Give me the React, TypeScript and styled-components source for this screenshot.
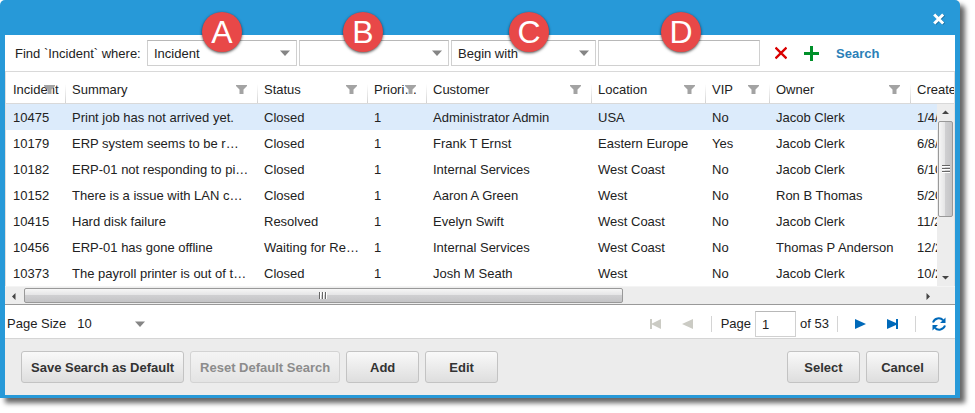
import React from "react";
import styled, { createGlobalStyle, css } from "styled-components";

const GlobalStyle = createGlobalStyle`
  * { box-sizing: border-box; }
  body {
    margin: 0;
    background: #fff;
    color: #222;
    font: 13px/16px "Liberation Sans", Arial, sans-serif;
    overflow: hidden;
  }
  button, input, select { font: inherit; color: inherit; margin: 0; }
`;

const Dialog = styled.main`
  margin: 0 15px 15px 0;
  padding: 0 5px 3px;
  background: #2799d8;
  border-radius: 5px 5px 0 0;
  box-shadow: 5px 5px 5px rgba(0, 0, 0, 0.6);
`;

const TitleBar = styled.header`
  height: 35px;
  display: flex;
  align-items: center;
  justify-content: flex-end;
  padding: 3px 9px 0 0;
`;

const IconButton = styled.button`
  display: flex;
  align-items: center;
  justify-content: center;
  padding: 0;
  border: 0;
  background: none;
  cursor: pointer;
  &:disabled { cursor: default; }
`;

const SearchBar = styled.form`
  display: flex;
  align-items: center;
  height: 37px;
  padding: 0 10px;
  background: #fff;
  border-bottom: 1px solid #d9d9d9;
`;

const SearchLabel = styled.span`
  width: 132px;
  padding-top: 2px;
  white-space: nowrap;
`;

const Field = styled.div<{ $width: number }>`
  position: relative;
  display: grid;
  align-items: center;
  width: ${(p) => p.$width}px;
  margin-right: 2px;
  & > * { grid-area: 1 / 1; }
  & > svg { justify-self: end; margin-right: 7px; pointer-events: none; }
`;

const boxed = css`
  width: 100%;
  height: 26px;
  padding: 2px 6px 0;
  border: 1px solid #d0d0d0;
  border-top-color: #b8b8b8;
  border-radius: 0;
  background: #fff;
  outline: none;
`;

const Select = styled.select`
  ${boxed}
  appearance: none;
`;

const TextInput = styled.input`
  ${boxed}
`;

const Badge = styled.span<{ $at: number }>`
  position: absolute;
  left: ${(p) => p.$at}px;
  top: -28px;
  width: 40px;
  height: 40px;
  border-radius: 50%;
  background: #e84848;
  box-shadow: 0 1px 3px rgba(0, 0, 0, 0.7);
  color: #fff;
  font-size: 32px;
  line-height: 40px;
  text-align: center;
`;

const SearchActions = styled.div`
  display: flex;
  align-items: center;
  gap: 17px;
  margin-left: 13px;
`;

const SearchButton = styled.button`
  padding: 2px 0 0;
  border: 0;
  background: none;
  color: #2a7fb8;
  font-weight: bold;
  cursor: pointer;
`;

const GridArea = styled.section`
  display: grid;
  grid-template-columns: minmax(0, 1fr) 17px;
  grid-template-rows: 32px auto;
  background: #fff;
  border-left: 1px solid #e0e0e0;
  border-right: 1px solid #e0e0e0;
`;

const TableClip = styled.div`
  grid-area: 1 / 1 / 3 / 3;
  overflow: hidden;
`;

const Table = styled.table`
  width: 100%;
  min-width: 1040px;
  table-layout: fixed;
  border-collapse: separate;
  border-spacing: 0;
`;

const HeaderCell = styled.th`
  position: relative;
  height: 32px;
  padding: 4px 6px 0;
  font-weight: normal;
  text-align: left;
  white-space: nowrap;
  border-bottom: 1px solid #d9d9d9;
  background: linear-gradient(transparent, #d0d0d0) right 0 top 12px / 1px 20px no-repeat;
  &:first-child { padding-left: 7px; }
`;

const FilterButton = styled(IconButton)`
  position: absolute;
  right: 11px;
  top: 13px;
`;

const Row = styled.tr<{ $selected?: boolean }>`
  background: ${(p) => (p.$selected ? "#dcebfb" : "#fff")};
`;

const Cell = styled.td`
  height: 26px;
  padding: 2px 6px 0;
  white-space: nowrap;
  overflow: hidden;
  &:first-child { padding-left: 7px; }
`;

const VScroll = styled.div`
  grid-area: 2 / 2;
  display: flex;
  flex-direction: column;
  align-items: center;
  background: #ededed;
  z-index: 1;
`;

const HScroll = styled.div`
  display: flex;
  height: 19px;
  padding: 1px 19px 1px 0;
  background: #ededed;
  border-top: 1px solid #f4f4f4;
  border-bottom: 1px solid #999;
`;

const ScrollArrow = styled(IconButton)`
  width: 18px;
  height: 17px;
  flex: none;
`;

const HTrack = styled.div`
  flex: 1;
  display: flex;
  padding-left: 1px;
`;

const HThumb = styled.div`
  width: 67%;
  height: 15px;
  display: flex;
  align-items: center;
  justify-content: center;
  border: 1px solid #999;
  border-radius: 2px;
  background: linear-gradient(#f6f6f6, #e4e4e5 48%, #cfcfd1 50%, #c4c4c6);
`;

const VTrack = styled.div`
  flex: 1;
  display: flex;
`;

const VThumb = styled.div`
  width: 15px;
  height: 65%;
  display: flex;
  align-items: center;
  justify-content: center;
  border: 1px solid #999;
  border-radius: 2px;
  background: linear-gradient(90deg, #f6f6f6, #e4e4e5 48%, #cfcfd1 50%, #c4c4c6);
`;

const Pager = styled.nav`
  display: flex;
  align-items: center;
  justify-content: space-between;
  height: 34px;
  padding: 4px 9px 0 2px;
  background: #fff;
  border-bottom: 1px solid #d5d5d5;
`;

const PagerGroup = styled.div`
  display: flex;
  align-items: center;
`;

const PageSize = styled(Field)`
  margin-left: 5px;
  & > svg { margin-right: 6px; }
`;

const PlainSelect = styled.select`
  width: 100%;
  height: 24px;
  padding: 0 6px;
  border: 0;
  background: none;
  appearance: none;
`;

const PageLabel = styled.label`
  display: flex;
  align-items: center;
  gap: 4px;
`;

const PageInput = styled(TextInput)`
  width: 41px;
`;

const Divider = styled.i<{ $before: number; $after: number }>`
  width: 1px;
  height: 16px;
  margin: 0 ${(p) => p.$after}px 0 ${(p) => p.$before}px;
  background: #d4d4d4;
`;

const Total = styled.span`
  margin-left: 4px;
`;

const NavButton = styled(IconButton)<{ $gap?: number }>`
  margin-left: ${(p) => p.$gap ?? 0}px;
`;

const Footer = styled.footer`
  display: flex;
  justify-content: space-between;
  padding: 12px 16px;
  background: #ececec;
`;

const ButtonGroup = styled.div`
  display: flex;
  gap: 6px;
`;

const Button = styled.button`
  min-width: 73px;
  height: 32px;
  padding: 2px 9px 0;
  border: 1px solid #c3c3c3;
  border-radius: 3px;
  background: linear-gradient(#f9f9f9, #dedede);
  color: #333;
  font-weight: bold;
  white-space: nowrap;
  cursor: pointer;
  &:disabled { border-color: #d3d3d3; background: linear-gradient(#f4f4f4, #e4e4e4); color: #8c8c8c; cursor: default; }
`;

const Caret = () => (
  <svg width="10" height="6" viewBox="0 0 10 6"><path d="M0 0.5h10L5 6z" fill="#858585" /></svg>
);
const Funnel = () => (
  <svg width="11" height="9" viewBox="0 0 11 9"><path d="M0 0h11v1L7.500 4.500V9h-4V4.500L0 1z" fill="#a3a3a3" /></svg>
);
const Grip = ({ vertical }: { vertical?: boolean }) => (
  <svg width="8" height="8" viewBox="0 0 8 8">
    <path d={vertical ? "M0 .5h8M0 3.5h8M0 6.5h8" : "M.5 0v7M3.5 0v7M6.5 0v7"} stroke="#666" />
    <path d={vertical ? "M0 1.5h8M0 4.5h8M0 7.5h8" : "M1.5 0v7M4.5 0v7M7.5 0v7"} stroke="#fff" />
  </svg>
);
const arrows = { left: "M5.5 1v7L2 4.5z", right: "M3.5 1v7L7 4.5z", up: "M1 6h7L4.5 2.5z", down: "M1 3h7L4.5 6.5z" };
const Arrow = ({ dir }: { dir: keyof typeof arrows }) => (
  <svg width="9" height="9" viewBox="0 0 9 9"><path d={arrows[dir]} fill="#444" /></svg>
);

const columns: [string, number][] = [
  ["Incident", 60], ["Summary", 192], ["Status", 110], ["Priori…", 59], ["Customer", 165],
  ["Location", 114], ["VIP", 64], ["Owner", 141],
];

const rows = [
  ["10475", "Print job has not arrived yet.", "Closed", "1", "Administrator Admin", "USA", "No", "Jacob Clerk", "1/4/"],
  ["10179", "ERP system seems to be r…", "Closed", "1", "Frank T Ernst", "Eastern Europe", "Yes", "Jacob Clerk", "6/8/"],
  ["10182", "ERP-01 not responding to pi…", "Closed", "1", "Internal Services", "West Coast", "No", "Jacob Clerk", "6/10"],
  ["10152", "There is a issue with LAN c…", "Closed", "1", "Aaron A Green", "West", "No", "Ron B Thomas", "5/20"],
  ["10415", "Hard disk failure", "Resolved", "1", "Evelyn Swift", "West Coast", "No", "Jacob Clerk", "11/2"],
  ["10456", "ERP-01 has gone offline", "Waiting for Re…", "1", "Internal Services", "West Coast", "No", "Thomas P Anderson", "12/2"],
  ["10373", "The payroll printer is out of t…", "Closed", "1", "Josh M Seath", "West", "No", "Jacob Clerk", "10/2"],
];

export default function App() {
  return (
    <>
      <GlobalStyle />
      <Dialog>
        <TitleBar>
          <IconButton aria-label="Close">
            <svg width="14" height="14" viewBox="0 0 14 14" fill="none" strokeWidth="3">
              <path d="M3 3l9 9M12 3l-9 9" stroke="#176b9c" />
              <path d="M2.2 2.5l9 9M11.2 2.5l-9 9" stroke="#fff" />
            </svg>
          </IconButton>
        </TitleBar>

        <SearchBar onSubmit={(e) => e.preventDefault()}>
          <SearchLabel>Find `Incident` where:</SearchLabel>
          <Field $width={150}>
            <Select aria-label="Object" defaultValue="Incident"><option>Incident</option></Select>
            <Caret />
            <Badge $at={55}>A</Badge>
          </Field>
          <Field $width={150}>
            <Select aria-label="Attribute"><option></option></Select>
            <Caret />
            <Badge $at={44}>B</Badge>
          </Field>
          <Field $width={145}>
            <Select aria-label="Operator"><option>Begin with</option></Select>
            <Caret />
            <Badge $at={58}>C</Badge>
          </Field>
          <Field $width={162}>
            <TextInput aria-label="Value" />
            <Badge $at={63}>D</Badge>
          </Field>
          <SearchActions>
            <IconButton type="button" aria-label="Remove condition">
              <svg width="12" height="14" viewBox="0 0 12 14"><path d="M.5 1.500l11 11M11.500 1.500l-11 11" stroke="#d90000" strokeWidth="2.400" /></svg>
            </IconButton>
            <IconButton type="button" aria-label="Add condition">
              <svg width="15" height="15" viewBox="0 0 15 15"><path d="M0 7.5h15M7.5 0v15" stroke="#00902a" strokeWidth="3" /></svg>
            </IconButton>
            <SearchButton type="submit">Search</SearchButton>
          </SearchActions>
        </SearchBar>

        <GridArea>
          <TableClip>
            <Table>
              <colgroup>
                {columns.map(([name, width]) => <col key={name} width={width} />)}
                <col />
              </colgroup>
              <thead>
                <tr>
                  {columns.map(([name]) => (
                    <HeaderCell key={name} scope="col">
                      {name}
                      <FilterButton aria-label={`Filter ${name}`}><Funnel /></FilterButton>
                    </HeaderCell>
                  ))}
                  <HeaderCell scope="col">Create</HeaderCell>
                </tr>
              </thead>
              <tbody>
                {rows.map((row, i) => (
                  <Row key={row[0]} $selected={i === 0}>
                    {row.map((value, j) => <Cell key={j}>{value}</Cell>)}
                  </Row>
                ))}
              </tbody>
            </Table>
          </TableClip>
          <VScroll>
            <ScrollArrow aria-label="Scroll up"><Arrow dir="up" /></ScrollArrow>
            <VTrack><VThumb><Grip vertical /></VThumb></VTrack>
            <ScrollArrow aria-label="Scroll down"><Arrow dir="down" /></ScrollArrow>
          </VScroll>
        </GridArea>
        <HScroll>
          <ScrollArrow aria-label="Scroll left"><Arrow dir="left" /></ScrollArrow>
          <HTrack><HThumb><Grip /></HThumb></HTrack>
          <ScrollArrow aria-label="Scroll right"><Arrow dir="right" /></ScrollArrow>
        </HScroll>

        <Pager>
          <PagerGroup>
            <label htmlFor="page-size">Page Size</label>
            <PageSize $width={80}>
              <PlainSelect id="page-size"><option>10</option></PlainSelect>
              <Caret />
            </PageSize>
          </PagerGroup>
          <PagerGroup>
            <NavButton disabled aria-label="First page">
              <svg width="12" height="10" viewBox="0 0 12 10"><path d="M0 0h2v4.5L11 0v10L2 5.5V10H0z" fill="#cbcbc4" /></svg>
            </NavButton>
            <NavButton $gap={20} disabled aria-label="Previous page">
              <svg width="11" height="10" viewBox="0 0 11 10"><path d="M11 0v10L0 5z" fill="#cbcbc4" /></svg>
            </NavButton>
            <Divider $before={18} $after={9} />
            <PageLabel>Page<PageInput defaultValue="1" /></PageLabel>
            <Total>of 53</Total>
            <Divider $before={8} $after={17} />
            <NavButton aria-label="Next page">
              <svg width="11" height="10" viewBox="0 0 11 10"><path d="M0 0v10l11-5z" fill="#0069b9" /></svg>
            </NavButton>
            <NavButton $gap={21} aria-label="Last page">
              <svg width="12" height="10" viewBox="0 0 12 10"><path d="M11 0H9v4L0 0v10l9-4v4h2z" fill="#0069b9" /></svg>
            </NavButton>
            <Divider $before={16} $after={16} />
            <NavButton aria-label="Refresh">
              <svg width="14" height="14" viewBox="0 0 14 14">
                <path d="M1 5.500C2.500 1 8 0 11.200 3.200M13 8.500C11.500 13 6 14 2.800 10.800" fill="none" stroke="#0069b9" strokeWidth="2" />
                <path d="M13.500 .5v5.500H8zM.5 13.500V8H6z" fill="#0069b9" />
              </svg>
            </NavButton>
          </PagerGroup>
        </Pager>

        <Footer>
          <ButtonGroup>
            <Button>Save Search as Default</Button>
            <Button disabled>Reset Default Search</Button>
            <Button>Add</Button>
            <Button>Edit</Button>
          </ButtonGroup>
          <ButtonGroup>
            <Button>Select</Button>
            <Button>Cancel</Button>
          </ButtonGroup>
        </Footer>
      </Dialog>
    </>
  );
}
